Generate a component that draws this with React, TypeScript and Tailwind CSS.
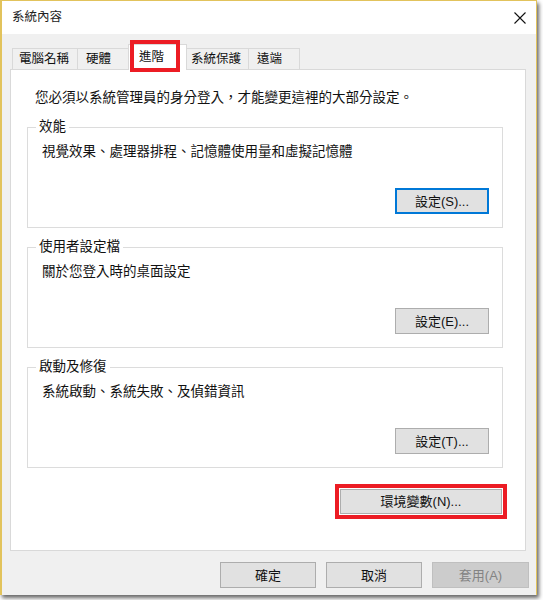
import React from 'react'

const tabs = [
  { label: '電腦名稱', w: 'w-[66px]', pl: 'pl-[6px]' },
  { label: '硬體', w: 'w-[53px]', pl: 'pl-[8px]' },
  { label: '進階', w: 'w-[59px]', pl: 'pl-[10px]', active: true },
  { label: '系統保護', w: 'w-[65px]', pl: 'pl-[6px]' },
  { label: '遠端', w: 'w-[52px]', pl: 'pl-[8px]' },
]

const groups = [
  { title: '效能', desc: '視覺效果、處理器排程、記憶體使用量和虛擬記憶體', btn: '設定(S)...', focused: true },
  { title: '使用者設定檔', desc: '關於您登入時的桌面設定', btn: '設定(E)...' },
  { title: '啟動及修復', desc: '系統啟動、系統失敗、及偵錯資訊', btn: '設定(T)...' },
]

function WinButton({ children, focused, disabled, className = '' }: { children: React.ReactNode; focused?: boolean; disabled?: boolean; className?: string }) {
  const look = disabled
    ? 'bg-[#cccccc] border border-[#bfbfbf] text-[#838383]'
    : focused
      ? 'bg-[#e1e1e1] border-2 border-[#0078d7]'
      : 'bg-[#e1e1e1] border border-[#adadad]'
  return <div className={`flex items-center justify-center leading-none text-[13px] ${look} ${className}`}>{children}</div>
}

export default function App() {
  return (
    <div className="w-[543px] h-[600px] bg-white font-['Liberation_Sans','Noto_Sans_CJK_TC',sans-serif] text-[13.5px] text-[#111]">
      <div className="w-[537px] h-[595px] flex flex-col border-t border-r border-l-2 border-[#e2c35c] bg-[#f0f0f0] shadow-[2px_3px_4px_rgba(0,0,0,0.6)]">
        {/* 제목 표시줄 */}
        <div className="h-[33px] shrink-0 bg-white flex items-center justify-between pl-[10px] pr-[10px]">
          <span className="text-[12.5px] leading-none text-[#222]">系統內容</span>
          <svg width="12" height="12" viewBox="0 0 12 12">
            <path d="M0.5 0.5 L11.5 11.5 M11.5 0.5 L0.5 11.5" stroke="#111" strokeWidth="1.1" />
          </svg>
        </div>

        <div className="flex-1 flex flex-col px-[8px] pt-[10px]">
          {/* 탭 */}
          <div className="flex items-end h-[25px] ml-[2px] text-[12.5px]">
            {tabs.map((t) =>
              t.active ? (
                <div key={t.label} className={`relative z-10 -mx-[2px] -mb-px h-[26px] ${t.w} ${t.pl} flex items-center bg-white border border-b-0 border-[#d9d9d9]`}>
                  <span className="leading-none">{t.label}</span>
                  <div className="absolute left-[1px] -top-[5px] w-[50px] h-[32px] border-4 border-[#ec1c24]" />
                </div>
              ) : (
                <div key={t.label} className={`h-[21px] ${t.w} ${t.pl} flex items-center bg-[#f0f0f0] border border-b-0 border-[#d9d9d9] -ml-px first:ml-0`}>
                  <span className="leading-none">{t.label}</span>
                </div>
              ),
            )}
          </div>

          {/* 패널 */}
          <div className="w-[516px] h-[482px] bg-white border border-[#d9d9d9] pl-[16px] pt-[20px] flex flex-col">
            <p className="leading-[16px] ml-[8px]">您必須以系統管理員的身分登入，才能變更這裡的大部分設定。</p>
            <div className="mt-[21px] flex flex-col gap-[19px]">
              {groups.map((g) => (
                <div key={g.title} className="relative w-[476px] h-[101px] border border-[#dcdcdc] pl-[14px] pr-[13px] pt-[16px] pb-[13px] flex flex-col">
                  <span className="absolute -top-[9px] left-[8px] bg-white px-[3px] leading-[16px]">{g.title}</span>
                  <p className="leading-[16px]">{g.desc}</p>
                  <WinButton focused={g.focused} className="mt-auto self-end w-[94px] h-[26px]">
                    {g.btn}
                  </WinButton>
                </div>
              ))}
            </div>
            <div className="w-[476px] flex justify-end mt-[21px]">
              <WinButton className="w-[162px] h-[25px] mr-[1px] outline-4 outline-offset-1 outline-[#ec1c24]">環境變數(N)...</WinButton>
            </div>
          </div>

          {/* 하단 버튼 */}
          <div className="flex justify-end gap-[10px] mt-[11px] -mr-[1px]">
            <WinButton className="w-[96px] h-[26px]">確定</WinButton>
            <WinButton className="w-[96px] h-[26px]">取消</WinButton>
            <WinButton disabled className="w-[97px] h-[26px]">套用(A)</WinButton>
          </div>
        </div>
      </div>
    </div>
  )
}
